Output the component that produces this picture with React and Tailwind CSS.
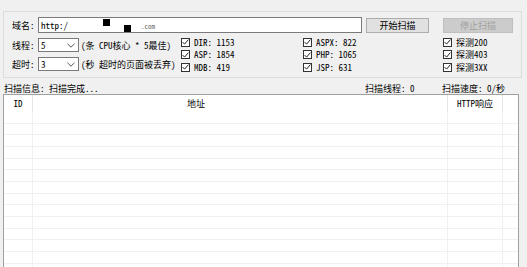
import React from 'react'

function Check({ label }) {
  return (
    <div className="flex items-center h-[12.5px] gap-[4px]">
      <span className="w-[9px] h-[9px] border border-[#333333] bg-white flex items-center justify-center shrink-0">
        <svg width="7" height="6" viewBox="0 0 7 6">
          <path d="M0.6 3.1 L2.6 5.1 L6.4 0.6" fill="none" stroke="#222222" strokeWidth="1" />
        </svg>
      </span>
      <span className="whitespace-pre">{label}</span>
    </div>
  )
}

function Chevron() {
  return (
    <svg width="8" height="5" viewBox="0 0 8 5" className="ml-auto mr-[3px]">
      <path d="M0.5 0.8 L4 4.2 L7.5 0.8" fill="none" stroke="#555555" strokeWidth="1" />
    </svg>
  )
}

function Row({ last }) {
  return (
    <div className="flex h-[11.67px] border-b border-[#f0f0f0] shrink-0">
      <div className="w-[29px] border-r border-[#f0f0f0]" />
      <div className="w-[415px] border-r border-[#f0f0f0]" />
      <div className="w-[55px] border-r border-[#f0f0f0]" />
      <div className="flex-1" />
    </div>
  )
}

export default function App() {
  const rows = Array.from({ length: 14 })

  return (
    <div className="w-[527px] h-[267px] overflow-hidden bg-[#f0f0f0] text-[9px] leading-none text-black flex flex-col pt-[11px] font-['Noto_Sans_Mono_CJK_SC','Noto_Sans_CJK_SC',sans-serif]">
      {/* settings group */}
      <div className="ml-[3px] w-[519px] h-[67px] border border-[#dcdcdc] shrink-0 flex flex-col">
        <div className="flex items-center h-[16px] mt-[5px] pl-[8px]">
          <span className="w-[26px]">域名:</span>
          <div className="relative w-[324px] h-[16px] bg-white border border-[#7a7a7a] flex items-center pl-[2px]">
            <span>http:/</span>
            <span className="absolute left-[64px] top-[1px] w-[7px] h-[7px] bg-black" />
            <span className="absolute left-[85px] top-[7px] w-[7px] h-[7px] bg-black" />
            <span className="ml-[73px] mt-[3px] text-[7px] text-[#666666]">.com</span>
          </div>
          <button className="ml-[4px] w-[63px] h-[15px] bg-[#e1e1e1] border border-[#adadad] text-[9px] leading-none">开始扫描</button>
          <button className="ml-[14px] w-[70px] h-[15px] bg-[#cccccc] border border-[#bfbfbf] text-[#a0a0a0] text-[9px] leading-none">停止扫描</button>
        </div>

        <div className="flex mt-[3px]">
          <div className="w-[177px] pl-[8px]">
            <div className="flex items-center h-[14px] mt-[2px]">
              <span className="w-[26px]">线程:</span>
              <div className="w-[41px] h-[14px] bg-white border border-[#7a7a7a] flex items-center pl-[2px]">
                <span>5</span>
                <Chevron />
              </div>
              <span className="ml-[2px] whitespace-pre">(条 CPU核心 * 5最佳)</span>
            </div>
            <div className="flex items-center h-[14px] mt-[5px]">
              <span className="w-[26px]">超时:</span>
              <div className="w-[41px] h-[14px] bg-white border border-[#7a7a7a] flex items-center pl-[2px]">
                <span>3</span>
                <Chevron />
              </div>
              <span className="ml-[2px] whitespace-pre">(秒 超时的页面被丢弃)</span>
            </div>
          </div>
          <div className="w-[122px]">
            <Check label="DIR: 1153" />
            <Check label="ASP: 1854" />
            <Check label="MDB: 419" />
          </div>
          <div className="w-[140px]">
            <Check label="ASPX: 822" />
            <Check label="PHP: 1065" />
            <Check label="JSP: 631" />
          </div>
          <div>
            <Check label="探测200" />
            <Check label="探测403" />
            <Check label="探测3XX" />
          </div>
        </div>
      </div>

      {/* status line */}
      <div className="flex items-center h-[11px] mt-[5px] pl-[4px] shrink-0">
        <span className="w-[361px]">扫描信息: 扫描完成...</span>
        <span className="w-[77px]">扫描线程: 0</span>
        <span>扫描速度: 0/秒</span>
      </div>

      {/* result list */}
      <div className="ml-[3px] w-[516px] h-[200px] shrink-0 bg-white border border-[#a0a0a0] flex flex-col">
        <div className="flex h-[17px] shrink-0">
          <div className="w-[29px] border-r border-[#e5e5e5] flex items-center justify-center">ID</div>
          <div className="w-[415px] border-r border-[#e5e5e5] flex items-center pl-[154px]">地址</div>
          <div className="w-[55px] border-r border-[#e5e5e5] flex items-center justify-center">HTTP响应</div>
          <div className="flex-1" />
        </div>
        {rows.map((_, i) => (
          <Row key={i} />
        ))}
      </div>
    </div>
  )
}
